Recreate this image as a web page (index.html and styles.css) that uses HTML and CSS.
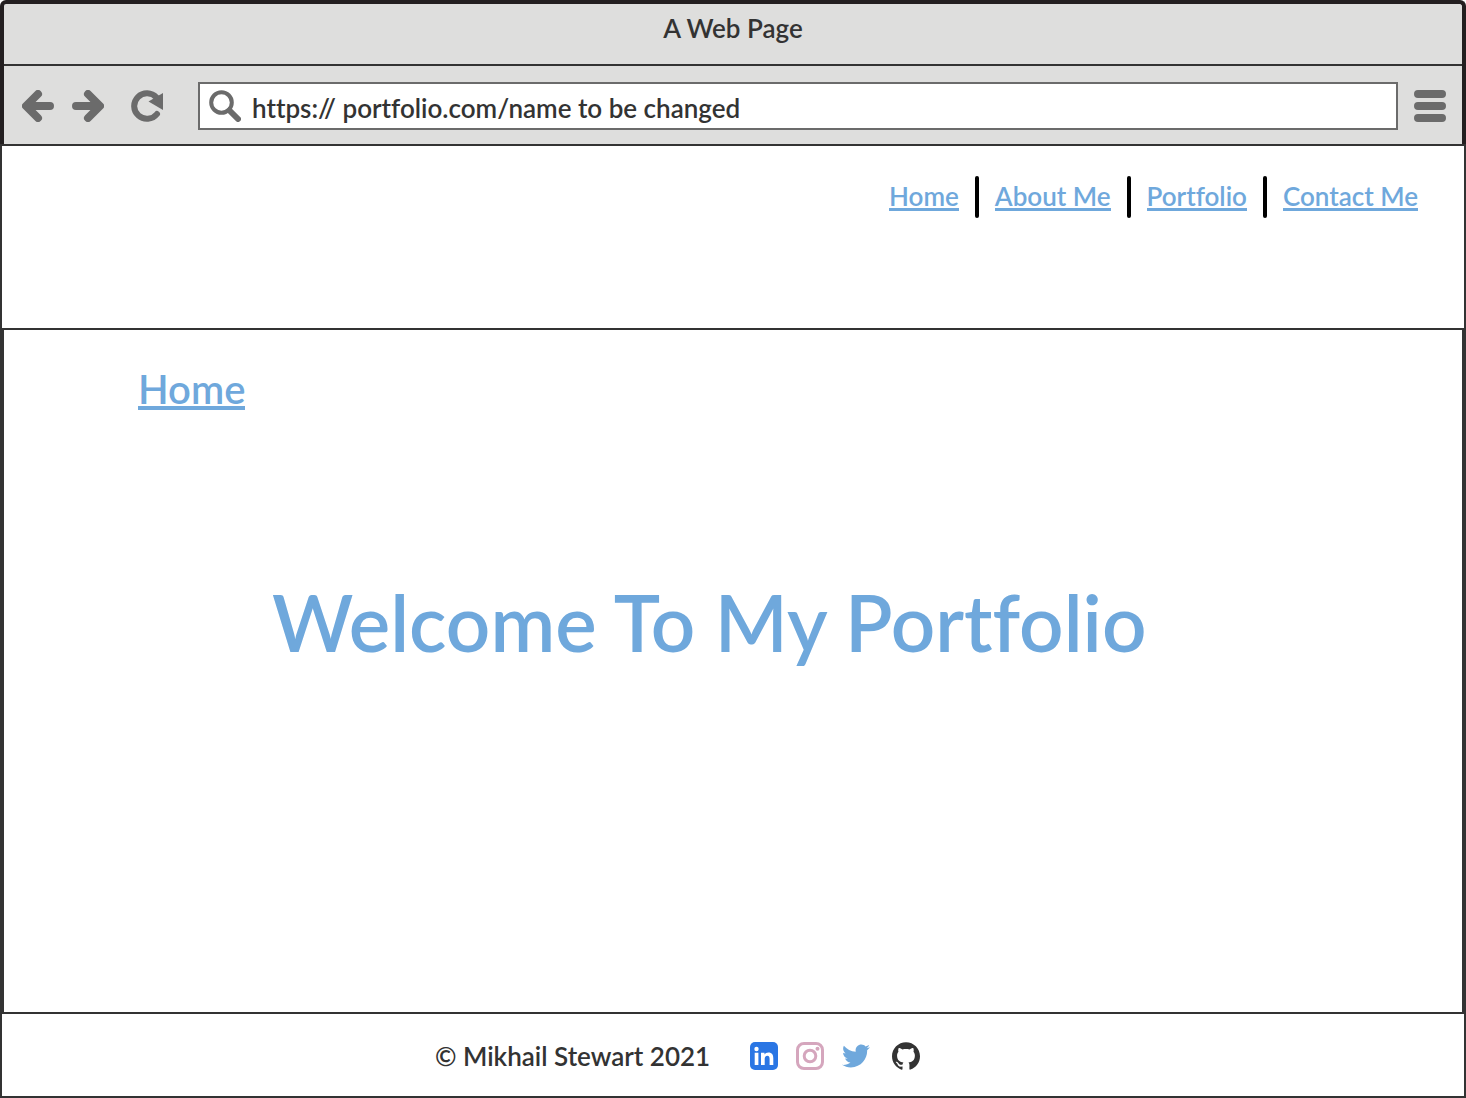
FILE: index.html
```html
<!DOCTYPE html>
<html lang="en">
<head>
<meta charset="utf-8">
<meta name="viewport" content="width=device-width, initial-scale=1">
<title>A Web Page</title>
<link rel="stylesheet" href="styles.css">
</head>
<body>
<div class="browser">
  <div class="chrome">
    <div class="titlebar">A Web Page</div>
    <div class="toolbar">
      <button class="tool back" type="button" aria-label="Back">
        <svg width="32" height="32" viewBox="0 0 32 32"><path d="M28 16H6M16 4L4 16l12 12" class="stroke"/></svg>
      </button>
      <button class="tool forward" type="button" aria-label="Forward">
        <svg width="32" height="32" viewBox="0 0 32 32"><path d="M4 16h22M16 4l12 12-12 12" class="stroke"/></svg>
      </button>
      <button class="tool reload" type="button" aria-label="Reload">
        <svg width="32" height="32" viewBox="0 0 32 32"><path d="M25.500 7.500A12.800 12.800 0 1 0 26 24" class="arc"/><path d="M32 3v17L17.500 11.500z" class="solid"/></svg>
      </button>
      <label class="address">
        <svg width="32" height="32" viewBox="0 0 32 32" aria-hidden="true"><circle cx="12.500" cy="12.500" r="10.300" class="lens"/><path d="M20.500 20.500l8.500 8.500" class="handle"/></svg>
        <input class="url" type="text" aria-label="Address" value="https:// portfolio.com/name to be changed">
      </label>
      <button class="tool menu" type="button" aria-label="Menu">
        <svg width="32" height="32" viewBox="0 0 32 32"><path d="M4 4h24M4 16h24M4 28h24" class="stroke"/></svg>
      </button>
    </div>
  </div>
  <header class="site-header">
    <nav class="nav" aria-label="Main">
      <a class="nav-link" href="#home">Home</a>
      <span class="divider"></span>
      <a class="nav-link" href="#about">About Me</a>
      <span class="divider"></span>
      <a class="nav-link" href="#portfolio">Portfolio</a>
      <span class="divider"></span>
      <a class="nav-link" href="#contact">Contact Me</a>
    </nav>
  </header>
  <main class="content" id="home">
    <a class="page-link" href="#home">Home</a>
    <h1 class="welcome">Welcome To My Portfolio</h1>
  </main>
  <footer class="site-footer">
    <span class="copyright">© Mikhail Stewart 2021</span>
    <div class="social">
      <a href="#linkedin" aria-label="LinkedIn"><svg width="28" height="28" viewBox="0 0 28 28"><rect width="28" height="28" rx="5" fill="#2a76e4"/><circle cx="6.500" cy="7" r="2.200" fill="#fff"/><path d="M4.700 10.800h3.700V23H4.700zM11 10.800h3.500v1.700c.8-1.300 2.100-2 3.900-2 3.600 0 4.900 2.300 4.900 5.700V23h-3.700v-6c0-2-.5-3.300-2.200-3.300-1.900 0-2.700 1.400-2.700 3.300v6H11z" fill="#fff"/></svg></a>
      <a href="#instagram" aria-label="Instagram"><svg width="28" height="28" viewBox="0 0 28 28" fill="none" stroke="#d5a6bd" stroke-width="3"><rect x="1.500" y="1.500" width="25" height="25" rx="6.500"/><circle cx="14" cy="14" r="5.800"/><circle cx="21.500" cy="6.800" r="2" fill="#d5a6bd" stroke="none"/></svg></a>
      <a href="#twitter" aria-label="Twitter"><svg width="28" height="28" viewBox="0 0 24 24"><path fill="#6fa8dc" d="M23.954 4.569c-.885.389-1.830.654-2.825.775 1.014-.611 1.794-1.574 2.163-2.723-.951.555-2.005.959-3.127 1.184-.896-.959-2.173-1.559-3.591-1.559-2.717 0-4.920 2.203-4.920 4.917 0 .390.045.765.127 1.124C7.691 8.094 4.066 6.130 1.640 3.161c-.427.722-.666 1.561-.666 2.475 0 1.710.870 3.213 2.188 4.096-.807-.026-1.566-.248-2.228-.616v.061c0 2.385 1.693 4.374 3.946 4.827-.413.111-.849.171-1.296.171-.314 0-.615-.030-.916-.086.631 1.953 2.445 3.377 4.604 3.417-1.680 1.319-3.809 2.105-6.102 2.105-.390 0-.779-.023-1.170-.067 2.189 1.394 4.768 2.209 7.557 2.209 9.054 0 13.999-7.496 13.999-13.986 0-.209 0-.420-.015-.630.961-.689 1.800-1.560 2.460-2.548z"/></svg></a>
      <a class="github" href="#github" aria-label="GitHub"><svg width="28" height="28" viewBox="0 0 24 24"><path fill="#333" d="M12 .297c-6.630 0-12 5.373-12 12 0 5.303 3.438 9.800 8.205 11.385.6.113.82-.258.82-.577 0-.285-.010-1.040-.015-2.040-3.338.724-4.042-1.610-4.042-1.610C4.422 18.070 3.633 17.700 3.633 17.700c-1.087-.744.084-.729.084-.729 1.205.084 1.838 1.236 1.838 1.236 1.070 1.835 2.809 1.305 3.495.998.108-.776.417-1.305.76-1.605-2.665-.300-5.466-1.332-5.466-5.930 0-1.310.465-2.380 1.235-3.220-.135-.303-.540-1.523.105-3.176 0 0 1.005-.322 3.300 1.230.960-.267 1.980-.399 3-.405 1.020.006 2.040.138 3 .405 2.280-1.552 3.285-1.230 3.285-1.230.645 1.653.240 2.873.120 3.176.765.840 1.230 1.910 1.230 3.220 0 4.610-2.805 5.625-5.475 5.920.420.360.810 1.096.810 2.220 0 1.606-.015 2.896-.015 3.286 0 .315.210.690.825.570C20.565 22.092 24 17.592 24 12.297c0-6.627-5.373-12-12-12"/></svg></a>
    </div>
  </footer>
</div>
</body>
</html>
```
FILE: styles.css
```css
* {
  box-sizing: border-box;
}

body {
  margin: 0;
  background: #fff;
  color: #333;
  font-family: Lato, "Liberation Sans", sans-serif;
  font-size: 26px;
  font-weight: 600;
  font-variant-ligatures: none;
  line-height: 32px;
}

svg {
  display: block;
}

.browser {
  display: flex;
  flex-direction: column;
  min-height: 100vh;
}

.chrome {
  background: #dededd;
  border: 4px solid #231f20;
  border-bottom: 0;
  border-radius: 6px 6px 0 0;
}

.titlebar {
  height: 62px;
  padding-top: 8px;
  text-align: center;
  border-bottom: 2px solid #333;
}

.toolbar {
  display: flex;
  align-items: center;
  height: 78px;
  padding: 2px 16px 0 18px;
}

.tool {
  padding: 0;
  border: 0;
  background: none;
}

.forward {
  margin-left: 18px;
}

.reload {
  margin-left: 27px;
}

.menu {
  margin-left: 16px;
}

.stroke,
.arc,
.lens,
.handle {
  fill: none;
  stroke: #6b6b6b;
  stroke-width: 8px;
  stroke-linecap: round;
  stroke-linejoin: round;
}

.arc {
  stroke-width: 6px;
}

.lens {
  stroke-width: 4px;
}

.handle {
  stroke-width: 6px;
}

.solid {
  fill: #6b6b6b;
}

.address {
  display: flex;
  flex: 1;
  align-items: center;
  height: 48px;
  margin-left: 35px;
  padding-left: 9px;
  background: #fff;
  border: 2px solid #6b6b6b;
}

.url {
  flex: 1;
  min-width: 0;
  height: 44px;
  margin-left: 11px;
  padding: 4px 0 0;
  border: 0;
  outline: 0;
  background: none;
  color: #333;
  font: inherit;
  font-variant-ligatures: none;
}

.site-header {
  height: 184px;
  padding: 30px 46px 0;
  border: 2px solid #333;
  border-bottom: 0;
}

.nav {
  display: flex;
  align-items: center;
  justify-content: flex-end;
  gap: 16px;
}

.nav-link {
  color: #6fa8dc;
  line-height: 24px;
  text-decoration: none;
  border-bottom: 3px solid #6fa8dc;
}

.divider {
  width: 4px;
  height: 42px;
  background: #000;
  border-radius: 2px;
}

.content {
  flex: 1;
  padding: 42px 134px;
  border: 2px solid #333;
  border-width: 2px 4px 0;
}

.page-link {
  display: block;
  width: fit-content;
  color: #6fa8dc;
  font-size: 40px;
  line-height: 34px;
  text-decoration: none;
  border-bottom: 4px solid #6fa8dc;
}

.welcome {
  margin: 164px 0 0 134px;
  color: #6fa8dc;
  font-size: 78px;
  font-weight: 600;
  line-height: 96px;
}

.site-footer {
  display: flex;
  align-items: center;
  height: 86px;
  padding: 2px 0 0 433px;
  border: 2px solid #333;
}

.social {
  display: flex;
  gap: 18px;
  margin-left: 40px;
}

.github {
  margin-left: 4px;
}
```
